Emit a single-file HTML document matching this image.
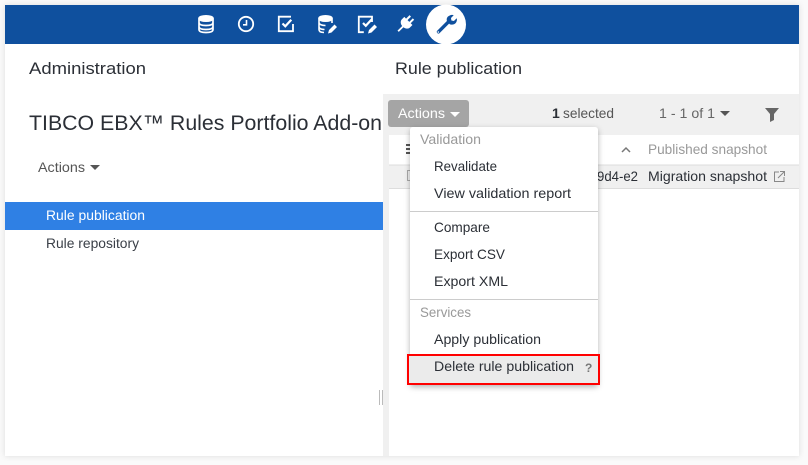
<!DOCTYPE html>
<html><head><meta charset="utf-8"><style>
html,body{margin:0;padding:0;background:#fafafa;width:808px;height:465px;overflow:hidden}
svg{display:block;font-family:"Liberation Sans",sans-serif}
</style></head><body>
<svg width="808" height="465" viewBox="0 0 808 465" xmlns="http://www.w3.org/2000/svg">
<defs>
<filter id="s" x="-10%" y="-10%" width="120%" height="120%"><feDropShadow dx="0" dy="2" stdDeviation="3" flood-color="#000" flood-opacity=".3"/></filter>
<filter id="w" x="-3%" y="-3%" width="106%" height="106%"><feDropShadow dx="0" dy="0" stdDeviation="3" flood-color="#000" flood-opacity=".12"/></filter>
<clipPath id="l"><rect x="5" y="100" width="378" height="40"/></clipPath>
</defs>
<rect x="5" y="5" width="794" height="451" fill="#fff" filter="url(#w)"/>
<rect x="5" y="5" width="794" height="39" fill="#0f509e"/>
<!-- nav icons -->
<g fill="none" stroke="#fff" stroke-width="1.700">
<ellipse cx="206" cy="18.500" rx="7" ry="2.700" fill="#fff"/>
<path d="M199 18.500v11c0 2 3 3 7 3s7-1 7-3v-11M199 22.500c0 2 3 3 7 3s7-1 7-3M199 26.500c0 2 3 3 7 3s7-1 7-3"/>
<circle cx="246" cy="24" r="7.200" stroke-width="1.800"/><path d="M246.500 20v4.800h-3.500" stroke-width="1.600"/>
<path d="M293 24v7.200h-14.200v-14.500h12.200" stroke-width="1.800"/>
<path d="M282.500 23.500l2.800 2.800 6-6.500" stroke-width="2.200"/>
<ellipse cx="325.500" cy="18.500" rx="6.500" ry="2.700" fill="#fff"/>
<path d="M319 18.500v11c0 2 2 3 5 3M332 18.500v4.500M319 22.500c0 2 3 3 6.500 3M319 26.500c0 2 2 3 5.500 3" stroke-width="1.600"/>
<path d="M372 22v-5.300h-13.200v15.500h5" stroke-width="1.800"/>
<path d="M363 23l2.800 2.800 6-6.500" stroke-width="2.200"/>
</g>
<path d="M329 30l5.500-5.500 2.500 2.500-5.500 5.500-3.500 1zM369 30l5.500-5.500 2.500 2.500-5.500 5.500-3.500 1z" fill="#fff"/>
<!-- plug -->
<g transform="rotate(45 405 24)" fill="#fff">
<rect x="402" y="14.500" width="2" height="6"/><rect x="406.500" y="14.500" width="2" height="6"/>
<path d="M399.500 19.500h11.500v3.500c0 2.500-2.500 4.500-5.700 4.500s-5.800-2-5.800-4.500z"/>
<rect x="404.400" y="27" width="1.800" height="7"/>
</g>
<circle cx="446" cy="24.500" r="20" fill="#fff"/>
<!-- wrench -->
<path d="M438.500 31.800 449 21.300" stroke="#0f509e" stroke-width="3.400" fill="none" stroke-linecap="round"/>
<path d="M449.500 15.600c2-.9 3.200-.8 4.200-.4l-2.700 2.800.4 2.500 2.500.5 2.800-2.700c.4 1.100.4 2.600-.6 4.200-1.500 2.100-4.100 2.700-6.300 1.700l-2.700-2.700c-.9-2.300-.3-4.800 2.400-5.900z" fill="#0f509e"/>
<circle cx="438.300" cy="32" r=".8" fill="#fff"/>
<!-- left -->
<text x="29" y="74" font-size="17" fill="#2b2f36" textLength="117" lengthAdjust="spacingAndGlyphs">Administration</text>
<text x="29" y="130" font-size="21" fill="#2b2f36" textLength="353" lengthAdjust="spacingAndGlyphs" clip-path="url(#l)">TIBCO EBX™ Rules Portfolio Add-on</text>
<text x="38" y="172" font-size="14" fill="#555" textLength="47" lengthAdjust="spacingAndGlyphs">Actions</text>
<path d="M90 165h10l-5 5z" fill="#555"/>
<rect x="5" y="202" width="378" height="28" fill="#2f80e4"/>
<text x="46" y="220" font-size="13.500" fill="#fff" textLength="99" lengthAdjust="spacingAndGlyphs">Rule publication</text>
<text x="46" y="248" font-size="13.500" fill="#3a3f47" textLength="93" lengthAdjust="spacingAndGlyphs">Rule repository</text>
<path d="M379.500 390v15M382.500 390v15" stroke="#bbb" stroke-width="1"/>
<!-- right -->
<text x="395" y="74" font-size="17" fill="#2b2f36" textLength="127" lengthAdjust="spacingAndGlyphs">Rule publication</text>
<rect x="383" y="94" width="416" height="362" fill="#f0f0f0"/>
<rect x="389" y="135" width="410" height="321" fill="#fff"/>
<rect x="389" y="165" width="410" height="24" fill="#f0f0f0"/>
<path d="M389 165h410M389 188.500h410" stroke="#ddd" stroke-width="1"/>
<rect x="388" y="100" width="81" height="27" rx="3" fill="#a5a5a5"/>
<text x="398" y="118" font-size="14" fill="#fff" textLength="47" lengthAdjust="spacingAndGlyphs">Actions</text>
<path d="M450 112h10l-5 5z" fill="#fff"/>
<text x="552" y="118" font-size="14" fill="#2b2f36" font-weight="bold">1</text>
<text x="563" y="118" font-size="14" fill="#555" textLength="51" lengthAdjust="spacingAndGlyphs">selected</text>
<text x="659" y="118" font-size="14" fill="#666" textLength="56" lengthAdjust="spacingAndGlyphs">1 - 1 of 1</text>
<path d="M720 111h10l-5 5z" fill="#555"/>
<path d="M765 108h14l-5 6v6l-4 2v-8z" fill="#666"/>
<path d="M622 152l4-4 4 4" fill="none" stroke="#777" stroke-width="1.500"/>
<text x="648" y="154" font-size="14" fill="#999" textLength="119" lengthAdjust="spacingAndGlyphs">Published snapshot</text>
<text x="597" y="181" font-size="14" fill="#2b2f36" textLength="41" lengthAdjust="spacingAndGlyphs">9d4-e2</text>
<text x="648" y="181" font-size="14" fill="#2b2f36" textLength="119" lengthAdjust="spacingAndGlyphs">Migration snapshot</text>
<path d="M779 172h-4.500v9.500h9.500V177M778 178l6-6M780 171.500h4.500v4.500" fill="none" stroke="#888" stroke-width="1"/>
<path d="M406 145h5M406 149h5M406 153h5" stroke="#555" stroke-width="2"/>
<rect x="407.500" y="170.500" width="5" height="10" fill="none" stroke="#aaa"/>
<!-- menu -->
<rect x="410" y="127" width="188" height="258" rx="3" fill="#fff" filter="url(#s)"/>
<g font-size="14">
<text x="420" y="144" fill="#999" textLength="61" lengthAdjust="spacingAndGlyphs">Validation</text>
<text x="434" y="171" fill="#2b2f36" textLength="63" lengthAdjust="spacingAndGlyphs">Revalidate</text>
<text x="434" y="198" fill="#2b2f36" textLength="137" lengthAdjust="spacingAndGlyphs">View validation report</text>
<text x="434" y="232" fill="#2b2f36" textLength="56" lengthAdjust="spacingAndGlyphs">Compare</text>
<text x="434" y="259" fill="#2b2f36" textLength="71" lengthAdjust="spacingAndGlyphs">Export CSV</text>
<text x="434" y="286" fill="#2b2f36" textLength="74" lengthAdjust="spacingAndGlyphs">Export XML</text>
<text x="420" y="317" fill="#999" textLength="51" lengthAdjust="spacingAndGlyphs">Services</text>
<text x="434" y="344" fill="#2b2f36" textLength="107" lengthAdjust="spacingAndGlyphs">Apply publication</text>
</g>
<path d="M410 211.500h188M410 299.500h188" stroke="#ccc" stroke-width="1"/>
<rect x="408" y="355" width="191" height="29" fill="#ebebeb" stroke="#f00" stroke-width="2"/>
<text x="434" y="371" font-size="14" fill="#2b2f36" textLength="140" lengthAdjust="spacingAndGlyphs">Delete rule publication</text>
<text x="585" y="372" font-size="12" font-weight="bold" fill="#777">?</text>
</svg>
</body></html>
